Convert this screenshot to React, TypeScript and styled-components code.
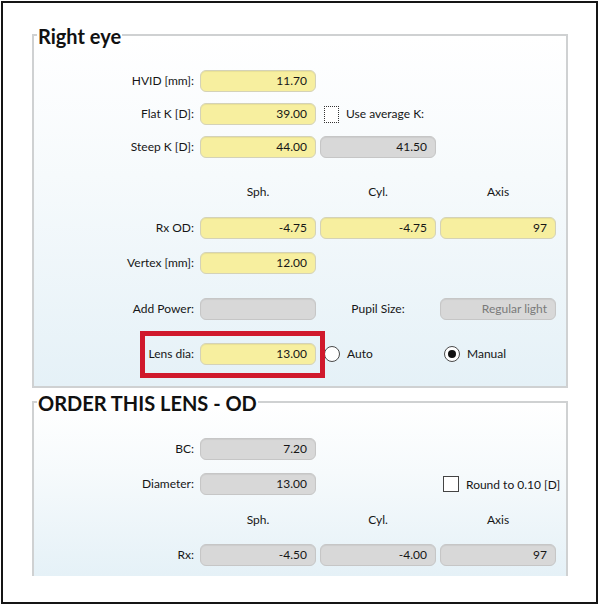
import React from "react";
import styled, { createGlobalStyle, css } from "styled-components";

const GlobalStyle = createGlobalStyle`
  html, body {
    margin: 0;
    padding: 0;
    background: #ffffff;
  }
  body {
    font-family: Lato, "Open Sans", "Liberation Sans", sans-serif;
    color: #161616;
  }
`;

const Frame = styled.div`
  box-sizing: border-box;
  margin: 1px 0 0 1px;
  width: 597px;
  height: 603px;
  border: 2px solid #151515;
  padding: 18px 0 0 29px;
  overflow: hidden;
`;

const Panel = styled.fieldset<{ $open?: boolean }>`
  box-sizing: border-box;
  width: 536px;
  margin: 0;
  padding: 0 0 ${(p) => (p.$open ? "10px" : "21px")} 0;
  border: 2px solid #cfd1d2;
  ${(p) =>
    p.$open &&
    css`
      border-bottom: none;
    `}
  background: linear-gradient(to bottom, #ffffff 0%, #f6fafc 40%, #e5f1f7 100%);
`;

const Legend = styled.legend`
  margin-left: 3px;
  padding: 3px 1px 0 1px;
  font-size: 20px;
  line-height: 24px;
  font-weight: 700;
  color: #111;
`;

const Row = styled.div<{ $mt: number }>`
  position: relative;
  display: grid;
  grid-template-columns: 162px 116px 116px 116px;
  column-gap: 4px;
  align-items: center;
  height: 22px;
  margin-top: ${(p) => p.$mt}px;
  font-size: 12px;
  line-height: 14px;
`;

const Label = styled.label`
  text-align: right;
  padding-right: 2px;
`;

const Field = styled.div<{ $tone: "yellow" | "grey"; $muted?: boolean }>`
  box-sizing: border-box;
  height: 22px;
  display: flex;
  align-items: center;
  justify-content: flex-end;
  padding: 0 8px;
  border-radius: 6px;
  border: 1px solid ${(p) => (p.$tone === "yellow" ? "#d4d2b8" : "#c6c6c6")};
  background: ${(p) => (p.$tone === "yellow" ? "#f7ef9f" : "#d8d8d8")};
  color: ${(p) => (p.$muted ? "#7a7a7a" : "#161616")};
  box-shadow: inset 0 1px 1px rgba(0, 0, 0, 0.06);
`;

const ColHead = styled.div`
  text-align: center;
`;

const CenterText = styled.div`
  text-align: center;
`;

const Option = styled.div<{ $align?: "center" | "end" }>`
  display: flex;
  align-items: ${(p) => (p.$align === "end" ? "flex-end" : "center")};
  gap: 7px;
  padding-left: ${(p) => (p.$align === "end" ? 3 : 4)}px;
  white-space: nowrap;
`;

const Check = styled.span<{ $dotted?: boolean }>`
  box-sizing: border-box;
  display: inline-block;
  flex: none;
  width: ${(p) => (p.$dotted ? 15 : 16)}px;
  height: ${(p) => (p.$dotted ? 17 : 16)}px;
  background: #fff;
  border: ${(p) => (p.$dotted ? "1.5px dotted #333" : "1px solid #444")};
`;

const Radio = styled.span<{ $checked?: boolean }>`
  box-sizing: border-box;
  position: relative;
  display: inline-block;
  flex: none;
  width: 16px;
  height: 16px;
  border-radius: 50%;
  border: 1px solid #4a4a4a;
  background: #fff;
  ${(p) =>
    p.$checked &&
    css`
      &::after {
        content: "";
        position: absolute;
        left: 3px;
        top: 3px;
        width: 8px;
        height: 8px;
        border-radius: 50%;
        background: #111;
      }
    `}
`;

const Highlight = styled.span`
  position: absolute;
  left: 106px;
  top: -12px;
  width: 185px;
  height: 47px;
  box-sizing: border-box;
  border: 5px solid #d0192c;
  pointer-events: none;
`;

export default function App() {
  return (
    <>
      <GlobalStyle />
      <Frame>
        <Panel>
          <Legend>Right eye</Legend>
          <Row $mt={22}>
            <Label>HVID [mm]:</Label>
            <Field $tone="yellow">11.70</Field>
          </Row>
          <Row $mt={11}>
            <Label>Flat K [D]:</Label>
            <Field $tone="yellow">39.00</Field>
            <Option>
              <Check $dotted />
              <span>Use average K:</span>
            </Option>
          </Row>
          <Row $mt={11}>
            <Label>Steep K [D]:</Label>
            <Field $tone="yellow">44.00</Field>
            <Field $tone="grey">41.50</Field>
          </Row>
          <Row $mt={23}>
            <span />
            <ColHead>Sph.</ColHead>
            <ColHead>Cyl.</ColHead>
            <ColHead>Axis</ColHead>
          </Row>
          <Row $mt={14}>
            <Label>Rx OD:</Label>
            <Field $tone="yellow">-4.75</Field>
            <Field $tone="yellow">-4.75</Field>
            <Field $tone="yellow">97</Field>
          </Row>
          <Row $mt={13}>
            <Label>Vertex [mm]:</Label>
            <Field $tone="yellow">12.00</Field>
          </Row>
          <Row $mt={24}>
            <Label>Add Power:</Label>
            <Field $tone="grey" />
            <CenterText>Pupil Size:</CenterText>
            <Field $tone="grey" $muted>
              Regular light
            </Field>
          </Row>
          <Row $mt={23}>
            <Label>Lens dia:</Label>
            <Field $tone="yellow">13.00</Field>
            <Option>
              <Radio />
              <span>Auto</span>
            </Option>
            <Option>
              <Radio $checked />
              <span>Manual</span>
            </Option>
            <Highlight />
          </Row>
        </Panel>

        <Panel $open>
          <Legend>ORDER THIS LENS - OD</Legend>
          <Row $mt={23}>
            <Label>BC:</Label>
            <Field $tone="grey">7.20</Field>
          </Row>
          <Row $mt={13}>
            <Label>Diameter:</Label>
            <Field $tone="grey">13.00</Field>
            <span />
            <Option $align="end">
              <Check />
              <span>Round to 0.10 [D]</span>
            </Option>
          </Row>
          <Row $mt={14}>
            <span />
            <ColHead>Sph.</ColHead>
            <ColHead>Cyl.</ColHead>
            <ColHead>Axis</ColHead>
          </Row>
          <Row $mt={13}>
            <Label>Rx:</Label>
            <Field $tone="grey">-4.50</Field>
            <Field $tone="grey">-4.00</Field>
            <Field $tone="grey">97</Field>
          </Row>
        </Panel>
      </Frame>
    </>
  );
}
